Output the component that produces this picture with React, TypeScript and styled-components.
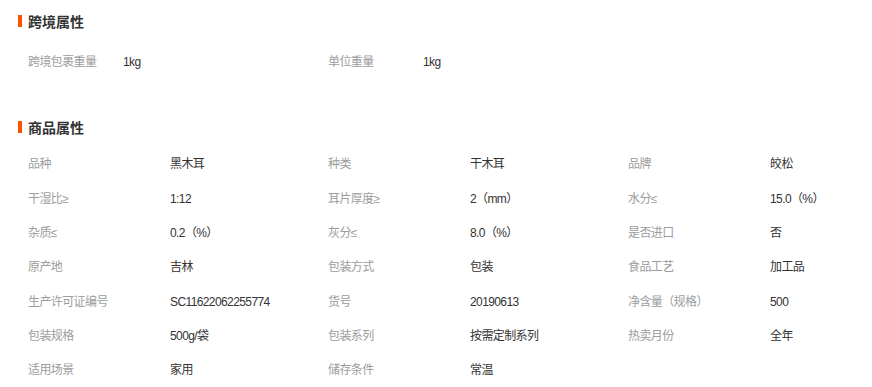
import React from "react";
import styled, { createGlobalStyle } from "styled-components";

const GlobalStyle = createGlobalStyle`
  html, body { margin: 0; padding: 0; background: #ffffff; }
  body {
    font-family: "Liberation Sans", "Noto Sans CJK SC", sans-serif;
    font-size: 12px;
    color: #333333;
  }
`;

const Page = styled.div`
  width: 872px;
  height: 387px;
  overflow: hidden;
  padding-left: 18px;
  box-sizing: border-box;
`;

const Section = styled.section<{ $top: number }>`
  padding-top: ${(p) => p.$top}px;
`;

const Title = styled.h3`
  margin: 0;
  display: flex;
  align-items: center;
  gap: 6px;
  height: 14px;
  font-size: 14px;
  line-height: 14px;
  font-weight: bold;
  color: #333333;
  font-family: "Noto Sans CJK SC", sans-serif;
  &::before {
    content: "";
    width: 4px;
    height: 12px;
    background: #ff5000;
  }
`;

const Grid = styled.div<{ $label: number; $top: number }>`
  display: grid;
  grid-template-columns: repeat(3, ${(p) => p.$label}px ${(p) => 300 - p.$label}px);
  grid-auto-rows: 34.33px;
  align-items: center;
  padding-left: 10px;
  margin-top: ${(p) => p.$top}px;
  letter-spacing: -0.6px;
  line-height: 14px;
`;

const Label = styled.div`
  color: #9c9c9c;
  white-space: nowrap;
`;

const Value = styled.div`
  color: #333333;
  white-space: nowrap;
`;

const cross: [string, string][] = [
  ["跨境包裹重量", "1kg"],
  ["单位重量", "1kg"],
];

const product: [string, string][] = [
  ["品种", "黑木耳"],
  ["种类", "干木耳"],
  ["品牌", "皎松"],
  ["干湿比≥", "1:12"],
  ["耳片厚度≥", "2（mm）"],
  ["水分≤", "15.0（%）"],
  ["杂质≤", "0.2（%）"],
  ["灰分≤", "8.0（%）"],
  ["是否进口", "否"],
  ["原产地", "吉林"],
  ["包装方式", "包装"],
  ["食品工艺", "加工品"],
  ["生产许可证编号", "SC11622062255774"],
  ["货号", "20190613"],
  ["净含量（规格）", "500"],
  ["包装规格", "500g/袋"],
  ["包装系列", "按需定制系列"],
  ["热卖月份", "全年"],
  ["适用场景", "家用"],
  ["储存条件", "常温"],
];

const Pairs = ({ items }: { items: [string, string][] }) => (
  <>
    {items.map(([k, v]) => (
      <React.Fragment key={k}>
        <Label>{k}</Label>
        <Value>{v}</Value>
      </React.Fragment>
    ))}
  </>
);

export default function App() {
  return (
    <Page>
      <GlobalStyle />
      <Section $top={14}>
        <Title>跨境属性</Title>
        <Grid $label={95} $top={17}>
          <Pairs items={cross} />
        </Grid>
      </Section>
      <Section $top={41}>
        <Title>商品属性</Title>
        <Grid $label={142} $top={13}>
          <Pairs items={product} />
        </Grid>
      </Section>
    </Page>
  );
}
